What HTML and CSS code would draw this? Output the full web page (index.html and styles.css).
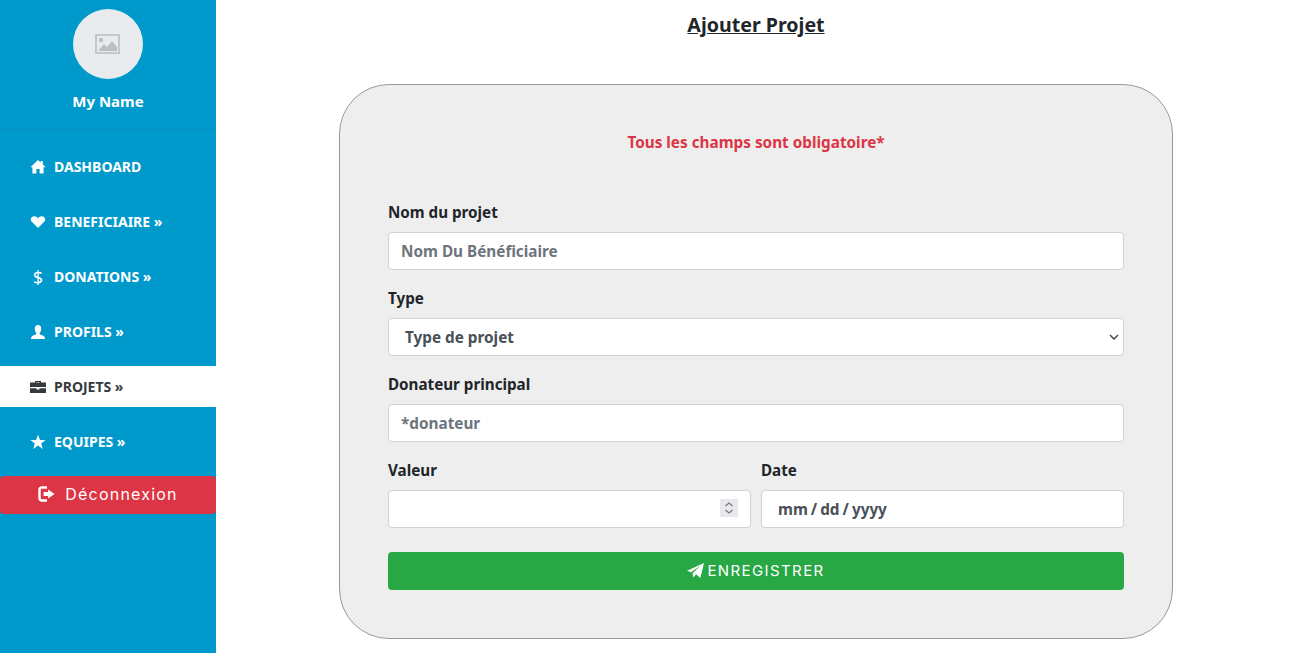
FILE: index.html
```html
<!DOCTYPE html>
<html lang="en">
<head>
    <meta charset="UTF-8">
    <meta name="viewport" content="width=device-width, initial-scale=1.0">
    <title>Ajouter Projet</title>
    <link rel="stylesheet" href="styles.css">
</head>
<body>
    <div class="sidebar">
        <div class="profile">
            <div class="avatar">
                <svg width="26" height="20" viewBox="0 0 26 20">
                    <rect x="1" y="1" width="23" height="18" fill="none" stroke="#bbbfc2" stroke-width="1.6"/>
                    <circle cx="6" cy="6" r="2.2" fill="#bbbfc2"/>
                    <path d="M3 17 L9 10 L12 13 L17 7 L22 13 V17 Z" fill="#bbbfc2"/>
                </svg>
            </div>
            <div class="my-name">My Name</div>
        </div>

        <!-- Menu -->
        <ul class="menu">
            <li><a href="#">
                <svg class="menu-icon" viewBox="0 0 16 16"><path d="M8 1 L10.6 3.4 V2 H12.8 V5.4 L15.6 8.2 H13.6 V14.6 H9.6 V10 H6.4 V14.6 H2.4 V8.2 H.4 Z" fill="currentColor"/></svg>
                DASHBOARD</a></li>
            <li><a href="#">
                <svg class="menu-icon" viewBox="0 0 16 16"><path d="M8 14 L1.8 7.8 C.2 6 .6 3.2 3 2.4 C5 1.8 7 2.6 8 4.4 C9 2.6 11 1.8 13 2.4 C15.4 3.2 15.8 6 14.2 7.8 Z" fill="currentColor"/></svg>
                BENEFICIAIRE »</a></li>
            <li><a href="#"><span class="menu-icon dollar">$</span> DONATIONS »</a></li>
            <li><a href="#">
                <svg class="menu-icon" viewBox="0 0 16 16"><path d="M8 1 C10.4 1 11.4 3 11.2 5.2 C11 7.2 10.2 8.4 9.6 9.2 C9.6 10.2 10.4 10.6 12 11.2 C14 12 15 12.6 15 15 H1 C1 12.6 2 12 4 11.2 C5.6 10.6 6.4 10.2 6.4 9.2 C5.8 8.4 5 7.2 4.8 5.2 C4.6 3 5.6 1 8 1 Z" fill="currentColor"/></svg>
                PROFILS »</a></li>
            <li class="active"><a href="#">
                <svg class="menu-icon" viewBox="0 0 16 16"><path d="M5 3.5 V2 H11 V3.5 H16 V8 H0 V3.5 Z M6.2 3.5 H9.8 V3 H6.2 Z M0 9.2 H6.5 V10.4 H9.5 V9.2 H16 V14 H0 Z" fill="currentColor" fill-rule="evenodd"/></svg>
                PROJETS »</a></li>
            <li><a href="#">
                <svg class="menu-icon" viewBox="0 0 16 16"><path d="M8 .8 L10 6 H15.6 L11.2 9.4 L12.8 15 L8 11.6 L3.2 15 L4.8 9.4 L.4 6 H6 Z" fill="currentColor"/></svg>
                EQUIPES »</a></li>
        </ul>

        <a href="#" class="logout">
            <svg class="logout-icon" viewBox="0 0 18 16"><path d="M9 1.5 H4 Q1.5 1.5 1.5 4 V12 Q1.5 14.5 4 14.5 H9" fill="none" stroke="currentColor" stroke-width="2.4"/><path d="M10 3.6 L16.6 8 L10 12.4 V10 H5.6 V6 H10 Z" fill="currentColor"/></svg>
            Déconnexion
        </a>
    </div>

    <div class="content">
        <h1>Ajouter Projet</h1>

        <form class="project-form">
            <p class="required">Tous les champs sont obligatoire*</p>

            <label for="projectName">Nom du projet</label>
            <input type="text" id="projectName" placeholder="Nom Du Bénéficiaire">

            <label for="projectType">Type</label>
            <select id="projectType">
                <option>Type de projet</option>
            </select>

            <label for="donor">Donateur principal</label>
            <input type="text" id="donor" placeholder="*donateur">

            <div class="form-row">
                <div class="form-col">
                    <label for="amount">Valeur</label>
                    <input type="number" id="amount">
                </div>
                <div class="form-col">
                    <label for="date">Date</label>
                    <input type="date" id="date">
                </div>
            </div>

            <button type="submit">
                <svg class="send-icon" viewBox="0 0 16 14"><path d="M16 0 L12.6 14 L8.6 10.6 L6 13.6 L5.2 9.6 L13 2.4 L3.8 8.6 L0 7.2 Z" fill="currentColor"/></svg>
                ENREGISTRER
            </button>
        </form>
    </div>
</body>
</html>
```

FILE: styles.css
```css
* {
    box-sizing: border-box;
}

html, body {
    height: 100%;
}

body {
    margin: 0;
    padding: 0;
    display: flex;
    overflow: hidden;
    font-family: "Noto Sans", "Open Sans", sans-serif;
    font-weight: 700;
    color: #212529;
    background-color: #fff;
}

.sidebar {
    width: 216px;
    flex-shrink: 0;
    background-color: #0099cc;
    color: #fff;
}

.profile {
    height: 130px;
    padding-top: 9px;
    border-bottom: 1px solid #0a8dbc;
    text-align: center;
}

.avatar {
    width: 70px;
    height: 70px;
    margin: 0 auto;
    border-radius: 50%;
    background-color: #e9ecef;
    display: flex;
    align-items: center;
    justify-content: center;
}

.my-name {
    margin-top: 11px;
    font-size: 15px;
    line-height: 22px;
}

.menu {
    list-style: none;
    margin: 0;
    padding: 16px 0 0;
}

.menu li {
    height: 41px;
    margin-bottom: 14px;
}

.menu a {
    height: 100%;
    padding-left: 30px;
    display: flex;
    align-items: center;
    gap: 8px;
    color: #fff;
    text-decoration: none;
    font-size: 14px;
}

.menu-icon {
    width: 16px;
    height: 16px;
    flex-shrink: 0;
}

.dollar {
    font-weight: 400;
    font-size: 18px;
    line-height: 16px;
    text-align: center;
}

.menu .active {
    background-color: #fff;
}

.menu .active a {
    color: #343a40;
}

.logout {
    height: 38px;
    padding-bottom: 2px;
    display: flex;
    align-items: center;
    justify-content: center;
    gap: 9px;
    border-radius: 4px;
    background-color: #dc3545;
    color: #fff;
    text-decoration: none;
    font-family: "Inter", sans-serif;
    font-weight: 400;
    font-size: 16px;
    letter-spacing: 1.2px;
}

.logout-icon {
    width: 18px;
    height: 16px;
}

.content {
    width: 1080px;
    text-align: center;
}

h1 {
    margin: 12px 0 47px;
    font-size: 19.6px;
    line-height: 25px;
    text-decoration: underline;
}

.project-form {
    width: 834px;
    height: 555px;
    margin: 0 auto;
    padding: 48px;
    border: 1px solid #999;
    border-radius: 50px;
    background-color: #eee;
    text-align: left;
}

.required {
    margin: 0 0 51px;
    text-align: center;
    color: #dc3545;
    font-size: 15.3px;
    line-height: 18px;
}

label {
    display: block;
    margin-bottom: 10px;
    font-size: 15.2px;
    line-height: 20px;
}

input, select {
    display: block;
    width: 100%;
    height: 38px;
    margin-bottom: 18px;
    padding: 6px 12px;
    border: 1px solid #ced4da;
    border-radius: 4px;
    background-color: #fff;
    font-family: inherit;
    font-weight: 700;
    font-size: 15.3px;
    color: #495057;
}

select {
    appearance: none;
    padding-left: 16px;
    background-image: url("data:image/svg+xml,%3Csvg xmlns='http://www.w3.org/2000/svg' width='10' height='6'%3E%3Cpath d='M1 1l4 4 4-4' fill='none' stroke='%23495057' stroke-width='1.6'/%3E%3C/svg%3E");
    background-repeat: no-repeat;
    background-position: right 4px center;
}

input::placeholder {
    color: #6c757d;
}

input[type="number"]::-webkit-inner-spin-button {
    -webkit-appearance: none;
    display: block;
    opacity: 1;
    width: 18px;
    height: 18px;
    background-color: #e9e9ed;
    background-image: url("data:image/svg+xml,%3Csvg xmlns='http://www.w3.org/2000/svg' width='18' height='18'%3E%3Cpath d='M5.5 7l3.5-3 3.5 3M5.5 11l3.5 3 3.5-3' fill='none' stroke='%23767680' stroke-width='1.2'/%3E%3C/svg%3E");
}

input[type="date"] {
    padding-left: 15px;
}

input[type="date"]::-webkit-calendar-picker-indicator {
    display: none;
}

input[type="date"]::-webkit-datetime-edit-text {
    padding: 0 2px;
}

.form-row {
    display: flex;
    gap: 10px;
}

.form-col {
    flex: 1;
}

button {
    width: 100%;
    height: 38px;
    margin-top: 6px;
    padding-bottom: 3px;
    display: flex;
    align-items: center;
    justify-content: center;
    gap: 3px;
    border: none;
    border-radius: 4px;
    background-color: #28a745;
    color: #fff;
    cursor: pointer;
    font-family: "Inter", sans-serif;
    font-weight: 400;
    font-size: 15px;
    letter-spacing: 1.4px;
}

.send-icon {
    width: 17px;
    height: 15px;
}
```
